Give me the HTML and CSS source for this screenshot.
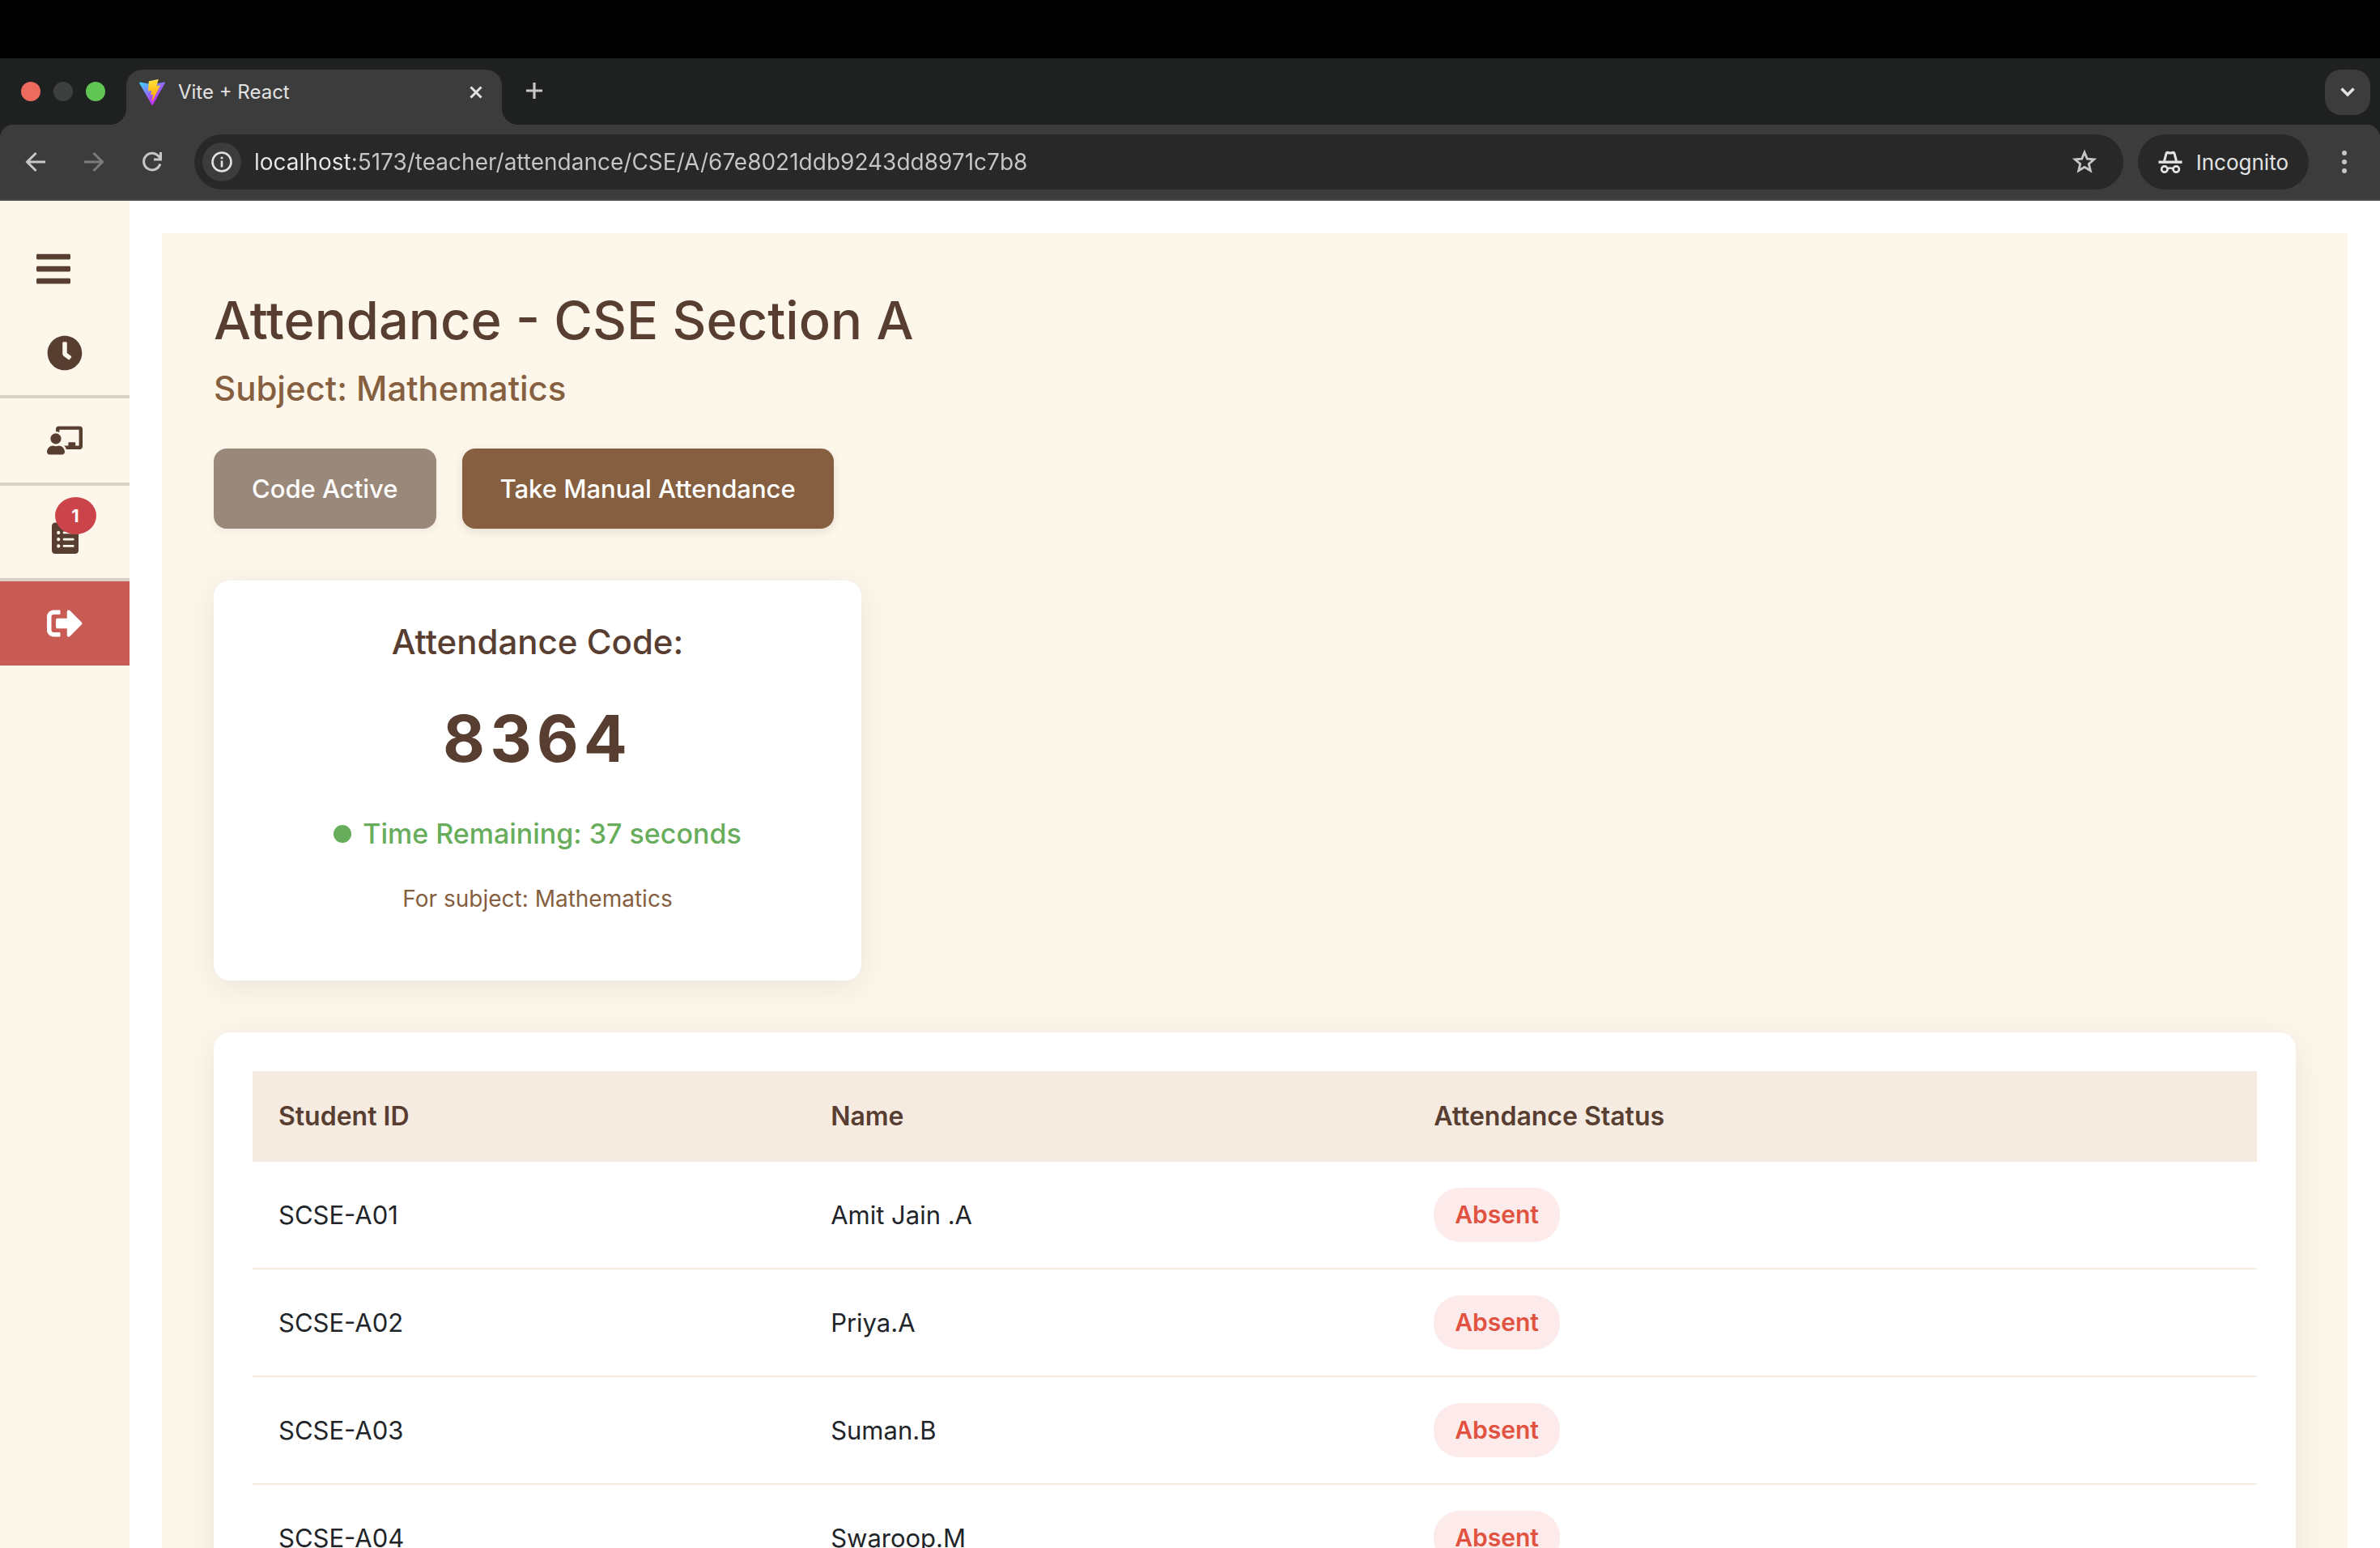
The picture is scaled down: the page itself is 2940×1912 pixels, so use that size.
FILE: index.html
```html
<!DOCTYPE html>
<html lang="en">
<head>
  <meta charset="utf-8">
  <meta name="viewport" content="width=device-width, initial-scale=1">
  <title>Vite + React</title>
  <link rel="stylesheet" href="styles.css">
</head>
<body>
  <div class="screen">
    <div class="menubar"></div>

    <header class="chrome">
      <div class="tabstrip">
        <div class="lights">
          <span class="light light-close"></span>
          <span class="light light-min"></span>
          <span class="light light-max"></span>
        </div>
        <div class="tab">
          <svg class="favicon" viewBox="0 0 256 257" aria-hidden="true">
            <defs>
              <linearGradient id="vite-body" x1="-.8%" x2="57.6%" y1="7.7%" y2="78.4%"><stop offset="0" stop-color="#41d1ff"/><stop offset="1" stop-color="#bd34fe"/></linearGradient>
              <linearGradient id="vite-bolt" x1="43.4%" x2="50.3%" y1="2.2%" y2="89%"><stop offset="0" stop-color="#ffea83"/><stop offset=".08" stop-color="#ffdd35"/><stop offset="1" stop-color="#ffa800"/></linearGradient>
            </defs>
            <path fill="url(#vite-body)" d="M255.153 37.938L134.897 252.976c-2.483 4.44-8.862 4.466-11.382.048L.875 37.958c-2.746-4.814 1.371-10.646 6.827-9.67l120.385 21.517a6.537 6.537 0 0 0 2.322-.004l117.867-21.483c5.438-.991 9.574 4.796 6.877 9.62Z"/>
            <path fill="url(#vite-bolt)" d="M185.432.063L96.44 17.501a3.268 3.268 0 0 0-2.634 3.014l-5.474 92.456a3.268 3.268 0 0 0 3.997 3.378l24.777-5.718c2.318-.535 4.413 1.507 3.936 3.838l-7.361 36.047c-.495 2.426 1.782 4.5 4.151 3.78l15.304-4.649c2.372-.72 4.652 1.36 4.15 3.788l-11.698 56.621c-.732 3.542 3.979 5.473 5.943 2.437l1.313-2.028l72.516-144.72c1.215-2.423-.88-5.186-3.54-4.672l-25.505 4.922c-2.396.462-4.435-1.77-3.759-4.114l16.646-57.705c.677-2.35-1.37-4.583-3.769-4.113Z"/>
          </svg>
          <span class="tab-title">Vite + React</span>
          <button class="icon-button tab-close" type="button" aria-label="Close tab">
            <svg width="16" height="16" viewBox="0 0 16 16"><path d="M1.5 1.5l13 13M14.500 1.500l-13 13" stroke="#e3e3e3" stroke-width="3"/></svg>
          </button>
        </div>
        <button class="icon-button new-tab" type="button" aria-label="New tab">
          <svg width="20" height="20" viewBox="0 0 20 20"><path d="M10 0v20M0 10h20" stroke="#c7c7c7" stroke-width="3.200"/></svg>
        </button>
        <button class="icon-button tab-search" type="button" aria-label="Search tabs">
          <svg width="18" height="12" viewBox="0 0 18 12"><path d="M1.500 1.500L9 9l7.500-7.500" fill="none" stroke="#e3e3e3" stroke-width="3.600"/></svg>
        </button>
      </div>

      <div class="toolbar">
        <div class="nav-buttons">
          <button class="icon-button nav-button" type="button" aria-label="Back">
            <svg width="26" height="26" viewBox="0 0 26 26"><path d="M25 13H3M13.500 2L2.500 13l11 11" fill="none" stroke="#c7c7c7" stroke-width="3"/></svg>
          </button>
          <button class="icon-button nav-button" type="button" aria-label="Forward">
            <svg width="26" height="26" viewBox="0 0 26 26"><path d="M1 13h22M12.500 2l11 11-11 11" fill="none" stroke="#7c7c7c" stroke-width="3"/></svg>
          </button>
          <button class="icon-button nav-button" type="button" aria-label="Reload">
            <svg width="26" height="26" viewBox="0 0 26 26"><path d="M22.800 15.500A10.300 10.300 0 1 1 20.500 5.600L23 8.500" fill="none" stroke="#c7c7c7" stroke-width="3"/><path d="M23.500 1v9H15" fill="none" stroke="#c7c7c7" stroke-width="3"/></svg>
          </button>
        </div>
        <div class="omnibox">
          <button class="icon-button site-info" type="button" aria-label="Site information">
            <svg width="26" height="26" viewBox="0 0 26 26"><circle cx="13" cy="13" r="11.500" fill="none" stroke="#e3e3e3" stroke-width="2.600"/><path d="M13 11.500v8" stroke="#e3e3e3" stroke-width="2.600"/><circle cx="13" cy="8" r="1.600" fill="#e3e3e3"/></svg>
          </button>
          <input class="url" type="text" aria-label="Address" spellcheck="false" value="localhost:5173/teacher/attendance/CSE/A/67e8021ddb9243dd8971c7b8">
          <button class="icon-button bookmark" type="button" aria-label="Bookmark this tab">
            <svg width="32" height="32" viewBox="0 0 32 32"><path d="M16 4.200l3.300 7.900 8.500.7-6.500 5.600 2 8.400L16 22.300l-7.300 4.500 2-8.400-6.500-5.600 8.500-.7z" fill="none" stroke="#c7c7c7" stroke-width="2.800"/></svg>
          </button>
        </div>
        <button class="incognito" type="button">
          <svg width="30" height="28" viewBox="0 0 30 28"><path d="M.5 12.500h29v3.400H.5z" fill="#e3e3e3"/><path d="M7.500 13L10 3.500q.6-1.500 2-1 3 1.200 6 0 1.400-.5 2 1l2.500 9.500" fill="none" stroke="#e3e3e3" stroke-width="3"/><circle cx="7.800" cy="23" r="3.700" fill="none" stroke="#e3e3e3" stroke-width="2.700"/><circle cx="22.200" cy="23" r="3.700" fill="none" stroke="#e3e3e3" stroke-width="2.700"/><path d="M11.500 22.500q3.500-2 7 0" fill="none" stroke="#e3e3e3" stroke-width="2.700"/></svg>
          Incognito
        </button>
        <button class="icon-button more" type="button" aria-label="Menu">
          <svg width="6" height="28" viewBox="0 0 6 28" fill="#c7c7c7"><circle cx="3" cy="3" r="3"/><circle cx="3" cy="14" r="3"/><circle cx="3" cy="25" r="3"/></svg>
        </button>
      </div>
    </header>

    <div class="page">
      <aside class="sidebar">
        <button class="menu-toggle" type="button" aria-label="Toggle menu">
          <svg width="42" height="48" viewBox="0 0 448 512" fill="currentColor"><path d="M16 132h416c8.837 0 16-7.163 16-16V76c0-8.837-7.163-16-16-16H16C7.163 60 0 67.163 0 76v40c0 8.837 7.163 16 16 16zm0 160h416c8.837 0 16-7.163 16-16v-40c0-8.837-7.163-16-16-16H16c-8.837 0-16 7.163-16 16v40c0 8.837 7.163 16 16 16zm0 160h416c8.837 0 16-7.163 16-16v-40c0-8.837-7.163-16-16-16H16c-8.837 0-16 7.163-16 16v40c0 8.837 7.163 16 16 16z"/></svg>
        </button>
        <nav class="side-nav">
          <a class="side-link" href="#schedule" aria-label="Schedule">
            <svg class="side-icon" viewBox="0 0 512 512" fill="currentColor"><path d="M256,8C119,8,8,119,8,256S119,504,256,504,504,393,504,256,393,8,256,8Zm92.490,313h0l-20,25a16,16,0,0,1-22.490,2.500h0l-67-49.720a40,40,0,0,1-15-31.230V112a16,16,0,0,1,16-16h32a16,16,0,0,1,16,16V256l58,42.500A16,16,0,0,1,348.490,321Z"/></svg>
          </a>
          <a class="side-link" href="#classes" aria-label="Classes">
            <svg class="side-icon" viewBox="0 0 640 512" fill="currentColor"><path d="M208 352c-2.390 0-4.780.35-7.060 1.090C187.980 357.300 174.350 360 160 360c-14.350 0-27.980-2.700-40.950-6.910-2.280-.74-4.660-1.090-7.050-1.090C49.940 352-.33 402.480 0 464.620.14 490.880 21.730 512 48 512h224c26.270 0 47.860-21.120 48-47.380.33-62.140-49.940-112.620-112-112.620zm-48-32c53.020 0 96-42.980 96-96s-42.980-96-96-96-96 42.980-96 96 42.980 96 96 96zM592 0H208c-26.470 0-48 22.250-48 49.590V96c23.420 0 45.100 6.780 64 17.800V64h352v288h-64v-64H384v64h-76.240c19.100 16.690 33.120 38.730 39.690 64H592c26.470 0 48-22.250 48-49.590V49.590C640 22.250 618.470 0 592 0z"/></svg>
          </a>
          <a class="side-link side-link-tall" href="#requests" aria-label="Requests, 1 new">
            <span class="badge-anchor">
              <svg class="side-icon" viewBox="0 0 384 512" fill="currentColor"><path d="M336 64h-80c0-35.300-28.700-64-64-64s-64 28.700-64 64H48C21.500 64 0 85.500 0 112v352c0 26.500 21.500 48 48 48h288c26.500 0 48-21.500 48-48V112c0-26.500-21.500-48-48-48zM96 424c-13.300 0-24-10.700-24-24s10.700-24 24-24 24 10.700 24 24-10.700 24-24 24zm0-96c-13.300 0-24-10.700-24-24s10.700-24 24-24 24 10.700 24 24-10.700 24-24 24zm0-96c-13.300 0-24-10.700-24-24s10.700-24 24-24 24 10.700 24 24-10.700 24-24 24zm96-192c13.300 0 24 10.700 24 24s-10.700 24-24 24-24-10.700-24-24 10.700-24 24-24zm128 368c0 4.400-3.600 8-8 8H168c-4.400 0-8-3.600-8-8v-16c0-4.400 3.600-8 8-8h144c4.400 0 8 3.600 8 8v16zm0-96c0 4.400-3.600 8-8 8H168c-4.400 0-8-3.600-8-8v-16c0-4.400 3.600-8 8-8h144c4.400 0 8 3.600 8 8v16zm0-96c0 4.400-3.600 8-8 8H168c-4.400 0-8-3.600-8-8v-16c0-4.400 3.600-8 8-8h144c4.400 0 8 3.600 8 8v16z"/></svg>
              <span class="count">1</span>
            </span>
          </a>
          <a class="side-link side-link-logout" href="#logout" aria-label="Log out">
            <svg class="side-icon" viewBox="0 0 512 512" fill="currentColor"><path d="M497 273L329 441c-15 15-41 4.500-41-17v-96H152c-13.300 0-24-10.700-24-24v-96c0-13.300 10.700-24 24-24h136V88c0-21.400 25.900-32 41-17l168 168c9.300 9.400 9.300 24.600 0 34zM192 436v-40c0-6.600-5.400-12-12-12H96c-17.700 0-32-14.300-32-32V160c0-17.700 14.300-32 32-32h84c6.600 0 12-5.400 12-12V76c0-6.600-5.400-12-12-12H96c-53 0-96 43-96 96v192c0 53 43 96 96 96h84c6.600 0 12-5.400 12-12z"/></svg>
          </a>
        </nav>
      </aside>

      <main class="content">
        <section class="panel">
          <h1 class="title">Attendance - CSE Section A</h1>
          <h2 class="subject">Subject: Mathematics</h2>
          <div class="actions">
            <button class="action action-inactive" type="button">Code Active</button>
            <button class="action" type="button">Take Manual Attendance</button>
          </div>

          <div class="card code-card">
            <h3 class="code-heading">Attendance Code:</h3>
            <p class="code">8364</p>
            <p class="timer"><span class="dot"></span>Time Remaining: 37 seconds</p>
            <p class="code-subject">For subject: Mathematics</p>
          </div>

          <div class="card">
            <table class="students">
              <colgroup><col class="col-id"><col class="col-name"><col></colgroup>
              <thead>
                <tr><th scope="col">Student ID</th><th scope="col">Name</th><th scope="col">Attendance Status</th></tr>
              </thead>
              <tbody>
                <tr><td>SCSE-A01</td><td>Amit Jain .A</td><td><span class="status">Absent</span></td></tr>
                <tr><td>SCSE-A02</td><td>Priya.A</td><td><span class="status">Absent</span></td></tr>
                <tr><td>SCSE-A03</td><td>Suman.B</td><td><span class="status">Absent</span></td></tr>
                <tr><td>SCSE-A04</td><td>Swaroop.M</td><td><span class="status">Absent</span></td></tr>
              </tbody>
            </table>
          </div>
        </section>
      </main>
    </div>
  </div>
</body>
</html>
```
FILE: styles.css
```css
* { box-sizing: border-box; }

body {
  margin: 0;
  font-family: Inter, "Liberation Sans", sans-serif;
  color: #212529;
  background: #fff;
}

h1, h2, h3, p { margin: 0; }

button {
  margin: 0;
  padding: 0;
  border: 0;
  background: none;
  font: inherit;
  color: inherit;
  cursor: pointer;
}

svg { display: block; flex: none; }

.screen {
  display: flex;
  flex-direction: column;
  height: 100vh;
  overflow: hidden;
}

.menubar { flex: none; height: 72px; background: #000; }

/* Browser window */
.chrome { flex: none; background: #1f2120; }

.icon-button {
  display: flex;
  flex: none;
  align-items: center;
  justify-content: center;
}

.tabstrip {
  display: flex;
  align-items: flex-start;
  padding: 14px 12px 0 26px;
}

.lights {
  display: flex;
  align-items: center;
  gap: 16px;
  height: 54px;
  margin-right: 26px;
}

.light { width: 24px; height: 24px; border-radius: 50%; }
.light-close { background: #ed6a5e; }
.light-min { background: #3e403f; }
.light-max { background: #61c554; }

.tab {
  position: relative;
  display: flex;
  align-items: center;
  width: 464px;
  height: 68px;
  padding: 0 24px 12px 16px;
  border-radius: 20px 20px 0 0;
  background: #3c3c3c;
}

/* Flared feet of the active tab */
.tab::before,
.tab::after {
  content: "";
  position: absolute;
  bottom: 0;
  width: 20px;
  height: 20px;
}
.tab::before { right: 100%; background: radial-gradient(circle at 0 0, transparent 20px, #3c3c3c 20px); }
.tab::after { left: 100%; background: radial-gradient(circle at 100% 0, transparent 20px, #3c3c3c 20px); }

.favicon { width: 32px; height: 32px; }

.tab-title {
  flex: 1;
  margin-left: 16px;
  font-size: 24px;
  line-height: 32px;
  color: #e3e3e3;
}

.new-tab { width: 40px; height: 52px; margin-left: 20px; }

.tab-search {
  width: 56px;
  height: 56px;
  margin-left: auto;
  border-radius: 20px;
  background: #3c3c3c;
}

.toolbar {
  display: flex;
  align-items: center;
  padding: 12px 0 12px 8px;
  border-bottom: 2px solid #4a4a4a;
  border-radius: 16px 16px 0 0;
  background: #3c3c3c;
}

.nav-buttons { display: flex; margin-right: 16px; }
.nav-button { width: 72px; height: 68px; }

.omnibox {
  display: flex;
  flex: 1;
  align-items: center;
  height: 68px;
  padding: 0 32px 0 10px;
  border-radius: 34px;
  background: #282828;
}

.site-info {
  width: 48px;
  height: 48px;
  border-radius: 50%;
  background: #3c3c3c;
}

/* The host is brighter than the rest of the address */
.url {
  flex: 1;
  min-width: 0;
  margin: 0 16px;
  padding: 0;
  border: 0;
  outline: 0;
  font: 28px/40px Inter, "Liberation Sans", sans-serif;
  color: transparent;
  background: linear-gradient(to right, #e8e8e8 119px, #c7c7c7 119px);
  background-clip: text;
}

.incognito {
  display: flex;
  align-items: center;
  gap: 17px;
  height: 68px;
  margin-left: 18px;
  padding: 0 25px;
  border-radius: 34px;
  background: #282828;
  font-size: 26px;
  color: #e3e3e3;
}

.more { width: 88px; height: 68px; }

/* Application */
.page {
  display: flex;
  flex: 1;
  min-height: 0;
  overflow: hidden;
  background: #fff;
}

.sidebar {
  flex: none;
  width: 160px;
  padding-top: 60px;
  background: #fdf6ea;
  color: #583e31;
}

.menu-toggle { display: block; margin: 0 0 28px 45px; }

.side-link {
  display: flex;
  align-items: center;
  justify-content: center;
  padding: 30px 0;
  border-bottom: 4px solid #dad1c7;
  color: inherit;
}

.side-link-tall { padding-top: 40px; }

.side-link-logout {
  border-bottom: 0;
  background: #c85b54;
  color: #fff;
}

.side-icon { height: 44px; max-width: 44px; }

.badge-anchor { position: relative; }

.count {
  position: absolute;
  top: -26px;
  left: 4px;
  width: 51px;
  height: 46px;
  border-radius: 50%;
  background: #cb444a;
  font-size: 22px;
  font-weight: 700;
  line-height: 46px;
  text-align: center;
  color: #fff;
}

.content { flex: 1; min-width: 0; padding: 40px 40px 0; }

.panel {
  min-height: 100%;
  padding: 64px;
  background: #fdf6ea;
}

.title {
  margin-bottom: 12px;
  font-size: 65px;
  font-weight: 500;
  line-height: 88px;
  color: #583e31;
}

.subject {
  font-size: 42px;
  font-weight: 500;
  line-height: 56px;
  color: #855f40;
}

.actions { display: flex; gap: 32px; margin: 46px 0 64px; }

.action {
  padding: 28px 47px;
  border-radius: 16px;
  background: #855f40;
  box-shadow: 0 4px 12px rgba(0, 0, 0, 0.1);
  font-size: 31px;
  font-weight: 500;
  line-height: 43px;
  color: #fff;
}

.action-inactive { background: #9a887b; box-shadow: 0 4px 12px rgba(0, 0, 0, 0.05); }

.card {
  padding: 48px;
  border-radius: 20px;
  background: #fff;
  box-shadow: 0 8px 40px rgba(0, 0, 0, 0.08);
}

.code-card {
  width: 800px;
  margin-bottom: 64px;
  padding-bottom: 81px;
  text-align: center;
}

.code-heading {
  margin-bottom: 43px;
  font-size: 42px;
  font-weight: 500;
  line-height: 56px;
  color: #583e31;
}

.code {
  margin-bottom: 48px;
  font-size: 80px;
  font-weight: 700;
  line-height: 96px;
  letter-spacing: 6px;
  color: #583e31;
}

.timer {
  display: flex;
  align-items: center;
  justify-content: center;
  gap: 14px;
  margin-bottom: 38px;
  font-size: 34px;
  font-weight: 500;
  line-height: 44px;
  color: #67ad5b;
}

.dot { width: 22px; height: 22px; border-radius: 50%; background: #67ad5b; }

.code-subject { font-size: 28px; line-height: 40px; color: #855f40; }

.students {
  width: 100%;
  table-layout: fixed;
  border-collapse: collapse;
  text-align: left;
}

.col-id { width: 27.55%; }
.col-name { width: 30.09%; }

.students th {
  padding: 32px;
  background: #f5ebe1;
  font-size: 32px;
  font-weight: 600;
  line-height: 48px;
  color: #583e31;
}

.students td {
  padding: 32px;
  border-bottom: 2px solid #f5ebe1;
  font-size: 31px;
  line-height: 51px;
}

.status {
  display: block;
  width: fit-content;
  padding: 8px 26px;
  border-radius: 32px;
  background: #fcebea;
  font-size: 30px;
  font-weight: 600;
  color: #e15241;
}
```
